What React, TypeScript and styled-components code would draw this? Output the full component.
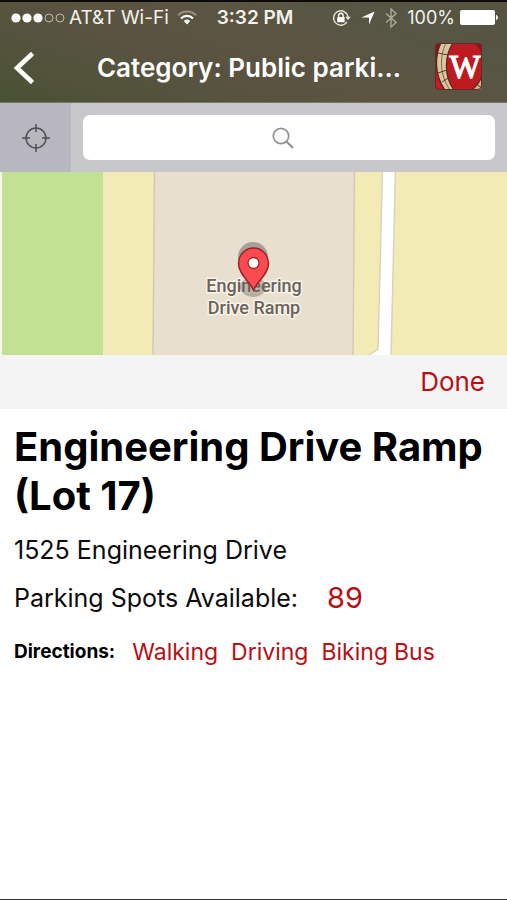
import React from "react";
import styled, { createGlobalStyle } from "styled-components";

const GlobalStyle = createGlobalStyle`
  *, *::before, *::after { box-sizing: border-box; }
  body {
    margin: 0;
    background: #fff;
    color: #0b0b0b;
    font-family: Inter, "Liberation Sans", sans-serif;
  }
  button { font: inherit; border: 0; padding: 0; cursor: pointer; }
  svg { display: block; flex: none; }
`;

const Screen = styled.div`
  display: flex;
  flex-direction: column;
  min-height: 100vh;
  border-bottom: 1px solid #3c3c3e;
`;

const Header = styled.header`
  border-top: 2px solid #0c0b08;
  border-bottom: 1px solid #77776c;
  background: linear-gradient(20deg, #4a5234 0%, #56533f 30%, #5c5442 55%, #555645 80%, #565440 100%);
  color: #fff;
`;

const StatusBar = styled.div`
  display: grid;
  grid-template-columns: 1fr auto 1fr;
  align-items: center;
  height: 32px;
  padding: 0 8px 0 11px;
  color: #f4f2ea;
  font-size: 19px;
  line-height: 32px;
`;

const StatusGroup = styled.div<{ $end?: boolean }>`
  display: flex;
  align-items: center;
  justify-content: ${(p) => (p.$end ? "flex-end" : "flex-start")};
  gap: ${(p) => (p.$end ? 10 : 4)}px;
  white-space: nowrap;
`;

const Carrier = styled.span`
  margin-right: 4px;
`;

const Battery = styled.span`
  display: flex;
  align-items: center;
  gap: 5px;
  font-size: 18px;
`;

const Clock = styled.time`
  font-weight: 600;
`;

const NavBar = styled.div`
  display: grid;
  grid-template-columns: 64px 1fr 64px;
  align-items: center;
  height: 68px;
  padding: 0 17px 0 8px;
`;

const BackButton = styled.button`
  display: flex;
  align-items: center;
  height: 48px;
  padding-left: 4px;
  background: none;
  color: #fff;
`;

const NavTitle = styled.h1`
  margin: 0;
  overflow: hidden;
  text-align: center;
  text-overflow: ellipsis;
  white-space: nowrap;
  font-size: 26px;
  font-weight: 600;
  line-height: 32px;
`;

const LogoLink = styled.a`
  justify-self: center;
  padding-bottom: 3px;
`;

const SearchBar = styled.form`
  display: flex;
  height: 69px;
  background: #c8c7cc;
`;

const LocateButton = styled.button`
  display: grid;
  place-items: center;
  width: 71px;
  background: #b8b7bf;
  color: #4e4e53;
`;

const SearchField = styled.label`
  display: grid;
  flex: 1;
  margin: 12px;
  color: #939397;

  > * { grid-area: 1 / 1; }
  svg { place-self: center; margin-right: 12px; pointer-events: none; }
`;

const SearchInput = styled.input`
  width: 100%;
  height: 45px;
  padding: 0 16px;
  border: 0;
  border-radius: 7px;
  background: #fff;
  color: #222;
  font: inherit;
  font-size: 20px;
`;

const MapView = styled.section`
  height: 183px;
  overflow: hidden;
  background: #f2ebb5;
`;

const MapDrawing = styled.svg`
  width: 100%;
  height: 100%;
`;

const MapLabel = styled.text`
  fill: #6b6258;
  stroke: #f8f4ec;
  stroke-width: 3px;
  stroke-linejoin: round;
  paint-order: stroke;
  text-anchor: middle;
  font-family: Roboto, sans-serif;
  font-size: 18px;
  font-weight: 500;
`;

const DoneBar = styled.div`
  display: flex;
  justify-content: flex-end;
  align-items: center;
  height: 54px;
  padding: 0 22px;
  background: #f4f4f5;
`;

const DoneButton = styled.button`
  background: none;
  color: #b80e14;
  font-size: 26px;
  line-height: 32px;
`;

const Details = styled.main`
  padding: 13px 12px 14px 14px;
`;

const PlaceName = styled.h2`
  margin: 0 0 6px;
  color: #000;
  font-size: 40px;
  font-weight: 700;
  line-height: 49px;
`;

const InfoLine = styled.p`
  display: flex;
  align-items: center;
  gap: 29px;
  margin: 0;
  font-size: 25px;
  line-height: 48px;
`;

const SpotCount = styled.strong`
  color: #b80e14;
  font-size: 29px;
  font-weight: 400;
`;

const Directions = styled.nav`
  display: flex;
  align-items: center;
  padding-top: 8px;
  line-height: 44px;
`;

const DirectionsLabel = styled.span`
  margin-right: 17px;
  color: #000;
  font-size: 19px;
  font-weight: 700;
`;

const DirectionLink = styled.a<{ $gap: number }>`
  margin-right: ${(p) => p.$gap}px;
  color: #b80e14;
  font-size: 23px;
  text-decoration: none;
`;

const SignalDots = () => (
  <svg width="54" height="12" viewBox="0 0 54 12" aria-hidden="true">
    {[5, 16, 27].map((x) => (
      <circle key={x} cx={x} cy="6" r="4.6" fill="#fff" />
    ))}
    {[38, 49].map((x) => (
      <circle key={x} cx={x} cy="6" r="4" fill="none" stroke="#bdbbae" strokeWidth="1" />
    ))}
  </svg>
);

const WifiIcon = () => (
  <svg width="20" height="16" viewBox="0 0 20 16" fill="none" aria-hidden="true">
    <path d="M1 5.2a12.6 12.6 0 0 1 18 0" stroke="#96947f" strokeWidth="2" />
    <path d="M4 8.4a8.4 8.4 0 0 1 12 0" stroke="#fff" strokeWidth="2.2" />
    <path d="M6.8 11a4.7 4.7 0 0 1 6.4 0L10 14.5z" fill="#fff" />
  </svg>
);

const RotationLockIcon = () => (
  <svg width="19" height="18" viewBox="0 0 19 18" fill="none" aria-hidden="true">
    <path d="M14.9 12.9A7.2 7.2 0 1 1 16 8.2" stroke="#e5e2d4" strokeWidth="1.4" />
    <path d="M13.3 7.8h5.4L16 11.2z" fill="#e5e2d4" />
    <rect x="5.2" y="8" width="7.4" height="5.2" rx="0.6" fill="#fff" />
    <path d="M6.7 8V6.5a2.2 2.2 0 0 1 4.4 0V8" stroke="#fff" strokeWidth="1.4" />
  </svg>
);

const LocationArrow = () => (
  <svg width="14" height="14" viewBox="0 0 14 14" aria-hidden="true">
    <path d="M13.6.5 8 13.6V6.4H.4z" fill="#fff" />
  </svg>
);

const BluetoothIcon = () => (
  <svg width="12" height="20" viewBox="0 0 12 20" fill="none" aria-hidden="true">
    <path d="M1 5.5 11 14.4 6 19V1l5 4.6L1 14.5" stroke="#aaa898" strokeWidth="1.4" />
  </svg>
);

const BatteryIcon = () => (
  <svg width="39" height="16" viewBox="0 0 39 16" aria-hidden="true">
    <rect x="0" y="0" width="35" height="15" rx="2" fill="#fff" />
    <path d="M36 5c2.6.4 2.6 4.6 0 5z" fill="#fff" />
  </svg>
);

const BackIcon = () => (
  <svg width="24" height="34" viewBox="0 0 24 34" fill="none" aria-hidden="true">
    <path d="M20.5 2.5 5 17l15.5 14.5" stroke="currentColor" strokeWidth="4.6" />
  </svg>
);

const CrestLogo = () => (
  <svg width="47" height="47" viewBox="0 0 47 47" role="img" aria-label="Wisconsin crest">
    <clipPath id="tile">
      <rect width="47" height="47" rx="4" />
    </clipPath>
    <g clipPath="url(#tile)">
      <rect width="47" height="47" fill="#bd1a22" />
      <path d="M0 0h17C2 13 2 34 17 47H0z" fill="#8d1519" />
      <path d="M0 14h3v18L12 47H0z" fill="#c31d25" />
      <path d="M6 0h12C9 13 9 34 19 47h-9C-1 32 0 12 6 0z" fill="#d9c5a0" stroke="#51291d" strokeWidth="1.2" />
      <path d="M11 0C4 14 5 33 15 47" fill="none" stroke="#816443" strokeWidth="1" />
      <path d="m3 10 10 2M3 30l9-3M7 39l8-5" stroke="#593a28" strokeWidth="1" />
      <path d="M47 33v14H37q7-6 10-14z" fill="#cbb38c" stroke="#51291d" strokeWidth="1.2" />
      <path d="m41 41 6 4" stroke="#593a28" strokeWidth="1" />
      <path d="M39 0h8v12Q45 5 39 0z" fill="#8d1519" />
      <text
        x="30"
        y="35"
        fill="#fff"
        stroke="#fff"
        strokeWidth="1.2"
        textAnchor="middle"
        fontFamily="Liberation Serif, serif"
        fontSize="33"
      >
        W
      </text>
    </g>
    <rect x="0.5" y="0.5" width="46" height="46" rx="4" fill="none" stroke="#642c25" />
  </svg>
);

const CrosshairIcon = () => (
  <svg width="30" height="30" viewBox="0 0 30 30" fill="none" stroke="currentColor" strokeWidth="1.5" aria-hidden="true">
    <circle cx="15" cy="15" r="10" />
    <path d="M15 1v8M15 21v8M1 15h8M21 15h8" />
  </svg>
);

const SearchIcon = () => (
  <svg width="22" height="22" viewBox="0 0 22 22" fill="none" stroke="currentColor" aria-hidden="true">
    <circle cx="9" cy="9" r="7.7" strokeWidth="1.7" />
    <path d="m14.5 14.5 6.5 6.5" strokeWidth="2.2" />
  </svg>
);

const ParkingMap = () => (
  <MapDrawing viewBox="0 0 507 183" preserveAspectRatio="xMidYMid slice" role="img" aria-label="Map of Engineering Drive Ramp">
    <rect width="507" height="183" fill="#f2ebb5" />
    <path d="M0 0h2v183H0z" fill="#f3faeb" />
    <path d="M2 0h101v183H2z" fill="#c2e192" />
    <path d="M154.500 0h200L353 183H153z" fill="#e8dfce" />
    <path d="M154.500 0 153 183M354.500 0 353 183" stroke="#d5c9b4" strokeWidth="1.5" />
    <path d="M382.500-2h13L391 185h-27q8-3 14-8z" fill="#fff" stroke="#d9d2bd" strokeWidth="1.5" />
    <circle cx="253" cy="85" r="15" fill="#a6a098" />
    <MapLabel x="254" y="120">Engineering</MapLabel>
    <ellipse cx="253" cy="115" rx="13" ry="10" fill="#6b6258" fillOpacity="0.4" />
    <MapLabel x="254" y="142">Drive Ramp</MapLabel>
    <path
      d="M253.500 118c-4-9-15-16-15-26.500a15 15.500 0 0 1 30 0c0 10.500-11 17.500-15 26.500z"
      fill="#fb4b50"
      stroke="#9c2226"
      strokeWidth="1.5"
    />
    <circle cx="253.500" cy="91" r="5.5" fill="#fff" stroke="#9c2226" strokeWidth="1.3" />
  </MapDrawing>
);

const directions = [
  { name: "Walking", gap: 13 },
  { name: "Driving", gap: 13 },
  { name: "Biking", gap: 6 },
  { name: "Bus", gap: 0 },
];

export default function App() {
  return (
    <Screen>
      <GlobalStyle />
      <Header>
        <StatusBar>
          <StatusGroup>
            <SignalDots />
            <Carrier>AT&amp;T Wi-Fi</Carrier>
            <WifiIcon />
          </StatusGroup>
          <Clock>3:32 PM</Clock>
          <StatusGroup $end>
            <RotationLockIcon />
            <LocationArrow />
            <BluetoothIcon />
            <Battery>
              100%
              <BatteryIcon />
            </Battery>
          </StatusGroup>
        </StatusBar>
        <NavBar>
          <BackButton type="button" aria-label="Back">
            <BackIcon />
          </BackButton>
          <NavTitle>Category: Public parki...</NavTitle>
          <LogoLink href="#home" aria-label="Home">
            <CrestLogo />
          </LogoLink>
        </NavBar>
      </Header>
      <SearchBar role="search">
        <LocateButton type="button" aria-label="Find my location">
          <CrosshairIcon />
        </LocateButton>
        <SearchField>
          <SearchInput type="text" aria-label="Search" />
          <SearchIcon />
        </SearchField>
      </SearchBar>
      <MapView>
        <ParkingMap />
      </MapView>
      <DoneBar>
        <DoneButton type="button">Done</DoneButton>
      </DoneBar>
      <Details>
        <PlaceName>Engineering Drive Ramp (Lot 17)</PlaceName>
        <InfoLine>1525 Engineering Drive</InfoLine>
        <InfoLine>
          Parking Spots Available: <SpotCount>89</SpotCount>
        </InfoLine>
        <Directions aria-label="Directions">
          <DirectionsLabel>Directions:</DirectionsLabel>
          {directions.map((d) => (
            <DirectionLink key={d.name} href={`#${d.name.toLowerCase()}`} $gap={d.gap}>
              {d.name}
            </DirectionLink>
          ))}
        </Directions>
      </Details>
    </Screen>
  );
}
